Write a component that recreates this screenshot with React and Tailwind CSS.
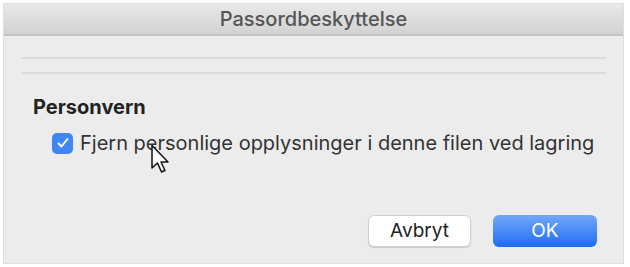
import React from 'react';

const Cursor = () => (
  <svg className="absolute left-[146px] top-[140px]" width="22" height="32" viewBox="0 0 22 32">
    <path d="M2 1.5 L2 24 L7.5 19 L11.5 28 L15 26.5 L11 18 L18 18 Z" fill="#fff" stroke="#111" strokeWidth="1.5" strokeLinejoin="round" />
  </svg>
);

const App = () => {
  return (
    <div className="w-[630px] h-[267px] bg-white pt-[3px] pl-[3px]" style={{ fontFamily: 'Inter, "Liberation Sans", Arial, sans-serif' }}>
      <div className="relative w-[621px] h-[261px] bg-[#ececec] border border-[#dedede] flex flex-col">
        <div className="h-[32px] flex items-center justify-center bg-gradient-to-b from-[#e9e9e9] to-[#d2d2d2] border-b-2 border-[#c4c4c4] text-[20px] font-medium text-[#555]">
          Passordbeskyttelse
        </div>
        <div className="px-[17px] pt-[21px]">
          <div className="h-[2px] bg-[#dcdcdc]" />
          <div className="h-[2px] bg-[#dcdcdc] mt-[13px]" />
        </div>
        <div className="pl-[29px] pt-[19px] text-[20px] font-bold text-[#222] leading-[28px]">Personvern</div>
        <div className="flex items-center pl-[48px] mt-[7px] gap-[7px]">
          <div className="w-[21px] h-[21px] rounded-[5px] bg-[#3f86f5] flex items-center justify-center">
            <svg width="14" height="14" viewBox="0 0 14 14">
              <path d="M2.5 7.5 L5.5 10.5 L11.5 3" fill="none" stroke="#fff" strokeWidth="2" strokeLinecap="round" strokeLinejoin="round" />
            </svg>
          </div>
          <span className="text-[20px] text-[#333]">Fjern personlige opplysninger i denne filen ved lagring</span>
        </div>
        <div className="flex justify-end gap-[22px] pr-[26px] mt-auto mb-[16px]">
          <button className="w-[103px] h-[32px] rounded-[6px] bg-white border border-[#d0d0d0] shadow-[0_1px_1px_rgba(0,0,0,0.15)] text-[19px] text-[#222]">Avbryt</button>
          <button className="w-[104px] h-[32px] rounded-[6px] bg-gradient-to-b from-[#72a6f8] to-[#1c6bf4] text-[19px] text-white">OK</button>
        </div>
        <Cursor />
      </div>
    </div>
  );
};

export default App;
